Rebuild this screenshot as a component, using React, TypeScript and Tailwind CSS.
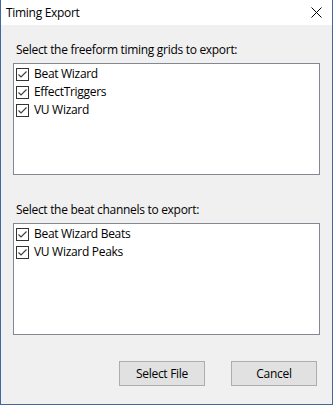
import React from 'react';

const CheckBox: React.FC = () => (
  <span className="w-[13px] h-[13px] border border-[#333333] bg-white flex items-center justify-center shrink-0">
    <svg width="11" height="11" viewBox="0 0 11 11">
      <polyline points="1.5,5.5 4,8 9.5,2.5" fill="none" stroke="#404040" strokeWidth="1.2" />
    </svg>
  </span>
);

const CheckList: React.FC<{ items: string[] }> = ({ items }) => (
  <div className="h-[112px] bg-white border border-[#828790] pt-[1px] pl-[2px]">
    {items.map((item) => (
      <div key={item} className="h-[18px] flex items-center gap-[5px]">
        <CheckBox />
        <span className="leading-none">{item}</span>
      </div>
    ))}
  </div>
);

const App: React.FC = () => {
  return (
    <div
      className="w-[333px] h-[405px] flex flex-col bg-[#f0f0f0] border-x border-b border-[#41679b] text-[12px] tracking-[-0.3px] text-black"
      style={{ fontFamily: '"Open Sans", "Noto Sans", sans-serif' }}
    >
      <div className="h-[25px] bg-white flex items-center justify-between pl-[5px] pr-[10px] shrink-0">
        <span>Timing Export</span>
        <svg width="11" height="11" viewBox="0 0 11 11">
          <path d="M0.5 0.5 L10.5 10.5 M10.5 0.5 L0.5 10.5" stroke="#000" strokeWidth="1" />
        </svg>
      </div>

      <div className="flex flex-col px-[12px]">
        <div className="mt-[17px] pl-[3px] h-[16px] leading-[16px]">Select the freeform timing grids to export:</div>
        <div className="mt-[5px]">
          <CheckList items={['Beat Wizard', 'EffectTriggers', 'VU Wizard']} />
        </div>

        <div className="mt-[27px] pl-[3px] h-[16px] leading-[16px]">Select the beat channels to export:</div>
        <div className="mt-[5px]">
          <CheckList items={['Beat Wizard Beats', 'VU Wizard Peaks']} />
        </div>

        <div className="mt-[26px] flex justify-end gap-[26px] pr-[3px]">
          <button className="w-[86px] h-[25px] bg-[#e1e1e1] border border-[#adadad]">Select File</button>
          <button className="w-[86px] h-[25px] bg-[#e1e1e1] border border-[#adadad]">Cancel</button>
        </div>
      </div>
    </div>
  );
};

export default App;
